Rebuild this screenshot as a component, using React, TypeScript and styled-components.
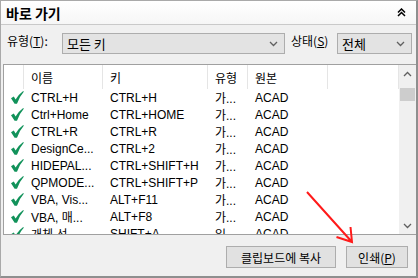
import * as React from 'react'
import styled, { createGlobalStyle } from 'styled-components'

const GlobalStyle = createGlobalStyle`
  html, body {
    margin: 0;
    padding: 0;
    background: #f0f0f0;
  }
  body {
    font-family: 'Liberation Sans', 'Noto Sans CJK KR', sans-serif;
    font-size: 12px;
    color: #000;
  }
`

const korean = `'Noto Sans CJK KR', 'Liberation Sans', sans-serif`

const Frame = styled.div`
  position: relative;
  width: 418px;
  height: 278px;
  box-sizing: border-box;
  display: flex;
  flex-direction: column;
  background: #f0f0f0;
  border: 1px solid #a9a9a9;
  border-right: 2px solid #8f8f8f;
  border-bottom: 2px solid #8f8f8f;
  overflow: hidden;
`

const TitleBar = styled.div`
  height: 23px;
  flex: none;
  display: flex;
  align-items: center;
  justify-content: space-between;
  padding: 0 10px 0 5px;
  background: linear-gradient(#ffffff, #f6f6f6);
  border-bottom: 1px solid #c9c9c9;
`

const Title = styled.span`
  font-family: ${korean};
  font-weight: bold;
  font-size: 14px;
  line-height: 14px;
  margin-top: 1px;
`

const FilterRow = styled.div`
  height: 39px;
  flex: none;
  display: flex;
  align-items: flex-start;
  padding: 8px 0 0 6px;
  box-sizing: border-box;
`

const Label = styled.span<{ width: number; gap?: number }>`
  width: ${p => p.width}px;
  margin-left: ${p => p.gap ?? 0}px;
  font-family: ${korean};
  font-size: 12px;
  line-height: 16px;
  white-space: nowrap;
  u {
    text-decoration: underline;
  }
`

const Combo = styled.div<{ width: number }>`
  width: ${p => p.width}px;
  height: 21px;
  box-sizing: border-box;
  display: flex;
  align-items: center;
  justify-content: space-between;
  padding: 0 6px 0 4px;
  background: #e3e3e3;
  border: 1px solid #adadad;
  font-family: ${korean};
  font-size: 13px;
`

const ListBox = styled.div`
  height: 169px;
  flex: none;
  margin-left: 2px;
  display: flex;
  background: #fff;
  border: 1px solid #a0a0a0;
  border-right: none;
  overflow: hidden;
`

const Table = styled.div`
  flex: 1;
  display: grid;
  grid-template-columns: 20px 79px 105px 40px 80px 1fr;
  grid-template-rows: 24px;
  grid-auto-rows: 17px;
  align-content: start;
  overflow: hidden;
`

const HeadCell = styled.div`
  display: flex;
  align-items: center;
  padding-left: 7px;
  border-right: 1px solid #e5e5e5;
  font-family: ${korean};
  font-size: 12px;
  &:last-child {
    border-right: none;
  }
`

const Cell = styled.div`
  display: flex;
  align-items: center;
  padding-left: 7px;
  white-space: nowrap;
  overflow: hidden;
  font-size: 12px;
`

const IconCell = styled.div`
  display: flex;
  align-items: center;
  padding-left: 7px;
`

const ScrollBar = styled.div`
  width: 17px;
  flex: none;
  display: flex;
  flex-direction: column;
  background: #f0f0f0;
`

const ScrollArrow = styled.div`
  height: 17px;
  display: flex;
  align-items: center;
  justify-content: center;
`

const Thumb = styled.div`
  height: 13px;
  margin: 6px 1px 0 1px;
  background: #cdcdcd;
`

const Track = styled.div`
  flex: 1;
`

const ButtonBar = styled.div`
  flex: 1;
  display: flex;
  justify-content: flex-end;
  align-items: flex-start;
  gap: 10px;
  padding: 11px 8px 0 0;
`

const Button = styled.button<{ width: number }>`
  width: ${p => p.width}px;
  height: 22px;
  padding: 0;
  background: #e1e1e1;
  border: 1px solid #adadad;
  font-family: ${korean};
  font-size: 12px;
  color: #000;
  u {
    text-decoration: underline;
  }
`

const Overlay = styled.svg`
  position: absolute;
  left: -1px;
  top: -1px;
  pointer-events: none;
`

const Chevron = ({ up }: { up?: boolean }) => (
  <svg width="9" height="6" viewBox="0 0 9 6">
    <path
      d={up ? 'M1 5 L4.5 1.5 L8 5' : 'M1 1 L4.5 4.5 L8 1'}
      fill="none"
      stroke="#606060"
      strokeWidth="1.3"
    />
  </svg>
)

const Check = () => (
  <svg width="13" height="13" viewBox="0 0 13 13">
    <path d="M0 7.2 L2.8 5.6 L4.6 8.4 Q7.5 3.5 12.2 0 L12.8 0.8 Q8.5 5.5 6 12.8 L3.6 12.8 Z" fill="#11925a" />
  </svg>
)

const rows = [
  ['CTRL+H', 'CTRL+H', '가...', 'ACAD'],
  ['Ctrl+Home', 'CTRL+HOME', '가...', 'ACAD'],
  ['CTRL+R', 'CTRL+R', '가...', 'ACAD'],
  ['DesignCe...', 'CTRL+2', '가...', 'ACAD'],
  ['HIDEPAL...', 'CTRL+SHIFT+H', '가...', 'ACAD'],
  ['QPMODE...', 'CTRL+SHIFT+P', '가...', 'ACAD'],
  ['VBA, Vis...', 'ALT+F11', '가...', 'ACAD'],
  ['VBA, 매...', 'ALT+F8', '가...', 'ACAD'],
  ['개체 선...', 'SHIFT+A', '일...', 'ACAD'],
]

export default function App() {
  return (
    <>
      <GlobalStyle />
      <Frame>
        <TitleBar>
          <Title>바로 가기</Title>
          <svg width="9" height="9" viewBox="0 0 9 9">
            <path d="M1 4.5 L4.5 1 L8 4.5 M1 8 L4.5 4.5 L8 8" fill="none" stroke="#000" strokeWidth="1.5" />
          </svg>
        </TitleBar>
        <FilterRow>
          <Label width={55}>
            유형(<u>T</u>):
          </Label>
          <Combo width={223}>
            <span>모든 키</span>
            <Chevron />
          </Combo>
          <Label width={46} gap={6}>
            상태(<u>S</u>)
          </Label>
          <Combo width={75}>
            <span>전체</span>
            <Chevron />
          </Combo>
        </FilterRow>
        <ListBox>
          <Table>
            <HeadCell />
            <HeadCell>이름</HeadCell>
            <HeadCell>키</HeadCell>
            <HeadCell>유형</HeadCell>
            <HeadCell>원본</HeadCell>
            <HeadCell />
            {rows.map(([name, key, type, src], i) => (
              <React.Fragment key={i}>
                <IconCell>
                  <Check />
                </IconCell>
                <Cell>{name}</Cell>
                <Cell>{key}</Cell>
                <Cell>{type}</Cell>
                <Cell>{src}</Cell>
                <Cell />
              </React.Fragment>
            ))}
          </Table>
          <ScrollBar>
            <ScrollArrow>
              <Chevron up />
            </ScrollArrow>
            <Thumb />
            <Track />
            <ScrollArrow>
              <Chevron />
            </ScrollArrow>
          </ScrollBar>
        </ListBox>
        <ButtonBar>
          <Button width={110}>클립보드에 복사</Button>
          <Button width={62}>
            인쇄(<u>P</u>)
          </Button>
        </ButtonBar>
        <Overlay width="418" height="278" viewBox="0 0 418 278">
          <path d="M307 192 L352 242 M336.5 237 L352 242 L350.5 227" fill="none" stroke="#ff1a1a" strokeWidth="2" />
        </Overlay>
      </Frame>
    </>
  )
}
